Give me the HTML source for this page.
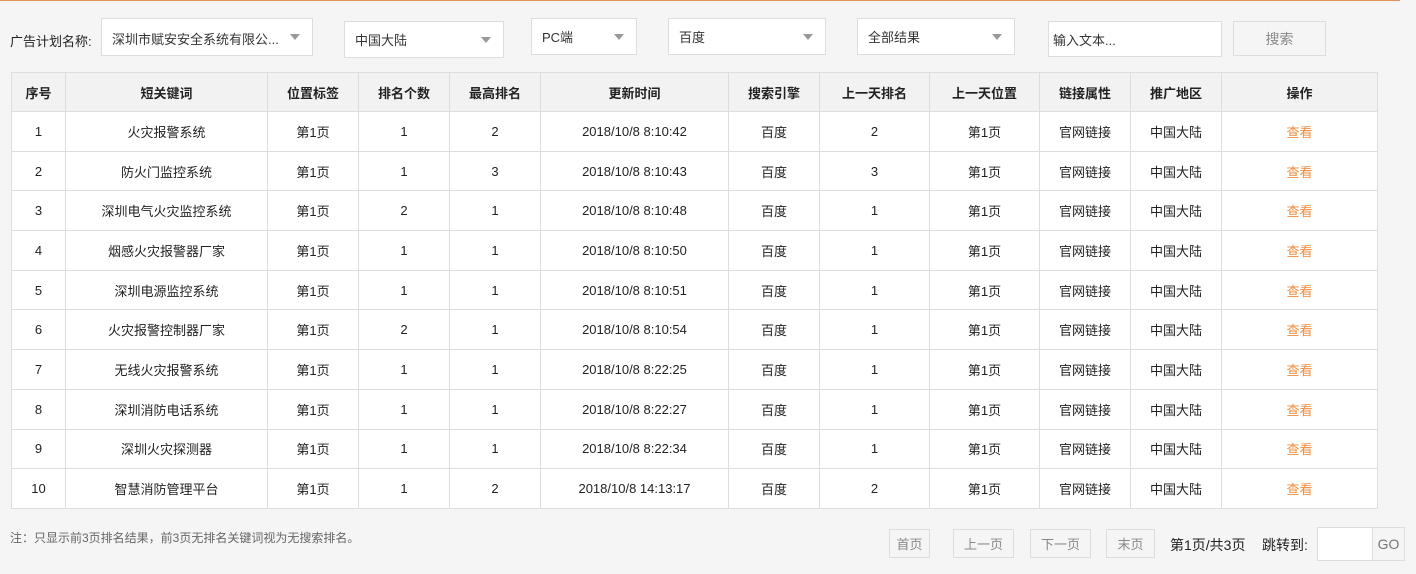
<!DOCTYPE html>
<html><head><meta charset="utf-8"><style>
*{box-sizing:border-box;margin:0;padding:0}
body{width:1416px;height:574px;background:#f5f5f5;font-family:"Liberation Sans","Noto Sans CJK SC",sans-serif;font-size:13px;color:#222;position:relative;overflow:hidden}
.topline{position:absolute;left:0;top:0;width:1400px;height:1px;background:#e8925a}
.abs{position:absolute}
.sel{position:absolute;background:#fff;border:1px solid #ddd;padding-left:10px;display:flex;align-items:center;color:#333}
.sel.a:after{content:"";position:absolute;right:12px;top:50%;margin-top:-3px;border-left:5px solid transparent;border-right:5px solid transparent;border-top:6px solid #999}
table{position:absolute;left:11px;top:72px;width:1366px;border-collapse:collapse;background:#fff;table-layout:fixed}
td,th{border:1px solid #ddd;text-align:center;font-size:13px;font-weight:normal;color:#222}
th{background:#f2f2f2;height:39px;font-weight:bold}
td{height:39.7px}
td.o{color:#f08c3e}
.btn{position:absolute;border:1px solid #ddd;background:#f5f5f5;color:#888;display:flex;align-items:center;justify-content:center}
</style></head><body>
<div class="topline"></div>
<div class="abs" style="left:10px;top:31px">广告计划名称:</div>
<div class="sel a" style="left:101px;top:18px;width:212px;height:38px;align-items:flex-start;padding-top:10px">深圳市赋安安全系统有限公...</div>
<div class="sel a" style="left:344px;top:21px;width:160px;height:37px">中国大陆</div>
<div class="sel a" style="left:531px;top:18px;width:106px;height:37px">PC端</div>
<div class="sel a" style="left:668px;top:18px;width:158px;height:37px">百度</div>
<div class="sel a" style="left:857px;top:18px;width:158px;height:37px">全部结果</div>
<div class="sel" style="left:1048px;top:21px;width:174px;height:36px;padding-left:4px">输入文本...</div>
<div class="btn" style="left:1233px;top:21px;width:93px;height:35px;font-size:14px">搜索</div>
<table>
<colgroup><col style="width:54px"><col style="width:202px"><col style="width:91px"><col style="width:91px"><col style="width:91px"><col style="width:188px"><col style="width:91px"><col style="width:110px"><col style="width:110px"><col style="width:91px"><col style="width:91px"><col style="width:156px"></colgroup>
<tr><th>序号</th><th>短关键词</th><th>位置标签</th><th>排名个数</th><th>最高排名</th><th>更新时间</th><th>搜索引擎</th><th>上一天排名</th><th>上一天位置</th><th>链接属性</th><th>推广地区</th><th>操作</th></tr>
<tr><td>1</td><td>火灾报警系统</td><td>第1页</td><td>1</td><td>2</td><td>2018/10/8 8:10:42</td><td>百度</td><td>2</td><td>第1页</td><td>官网链接</td><td>中国大陆</td><td class="o">查看</td></tr>
<tr><td>2</td><td>防火门监控系统</td><td>第1页</td><td>1</td><td>3</td><td>2018/10/8 8:10:43</td><td>百度</td><td>3</td><td>第1页</td><td>官网链接</td><td>中国大陆</td><td class="o">查看</td></tr>
<tr><td>3</td><td>深圳电气火灾监控系统</td><td>第1页</td><td>2</td><td>1</td><td>2018/10/8 8:10:48</td><td>百度</td><td>1</td><td>第1页</td><td>官网链接</td><td>中国大陆</td><td class="o">查看</td></tr>
<tr><td>4</td><td>烟感火灾报警器厂家</td><td>第1页</td><td>1</td><td>1</td><td>2018/10/8 8:10:50</td><td>百度</td><td>1</td><td>第1页</td><td>官网链接</td><td>中国大陆</td><td class="o">查看</td></tr>
<tr><td>5</td><td>深圳电源监控系统</td><td>第1页</td><td>1</td><td>1</td><td>2018/10/8 8:10:51</td><td>百度</td><td>1</td><td>第1页</td><td>官网链接</td><td>中国大陆</td><td class="o">查看</td></tr>
<tr><td>6</td><td>火灾报警控制器厂家</td><td>第1页</td><td>2</td><td>1</td><td>2018/10/8 8:10:54</td><td>百度</td><td>1</td><td>第1页</td><td>官网链接</td><td>中国大陆</td><td class="o">查看</td></tr>
<tr><td>7</td><td>无线火灾报警系统</td><td>第1页</td><td>1</td><td>1</td><td>2018/10/8 8:22:25</td><td>百度</td><td>1</td><td>第1页</td><td>官网链接</td><td>中国大陆</td><td class="o">查看</td></tr>
<tr><td>8</td><td>深圳消防电话系统</td><td>第1页</td><td>1</td><td>1</td><td>2018/10/8 8:22:27</td><td>百度</td><td>1</td><td>第1页</td><td>官网链接</td><td>中国大陆</td><td class="o">查看</td></tr>
<tr><td>9</td><td>深圳火灾探测器</td><td>第1页</td><td>1</td><td>1</td><td>2018/10/8 8:22:34</td><td>百度</td><td>1</td><td>第1页</td><td>官网链接</td><td>中国大陆</td><td class="o">查看</td></tr>
<tr><td>10</td><td>智慧消防管理平台</td><td>第1页</td><td>1</td><td>2</td><td>2018/10/8 14:13:17</td><td>百度</td><td>2</td><td>第1页</td><td>官网链接</td><td>中国大陆</td><td class="o">查看</td></tr>
</table>
<div class="abs" style="left:10px;top:529px;color:#666;font-size:12px">注：只显示前3页排名结果，前3页无排名关键词视为无搜索排名。</div>
<div class="btn" style="left:889px;top:529px;width:41px;height:29px">首页</div>
<div class="btn" style="left:953px;top:529px;width:61px;height:29px">上一页</div>
<div class="btn" style="left:1030px;top:529px;width:61px;height:29px">下一页</div>
<div class="btn" style="left:1106px;top:529px;width:49px;height:29px">末页</div>
<div class="abs" style="left:1170px;top:535px;color:#222;font-size:14px">第1页/共3页</div>
<div class="abs" style="left:1262px;top:535px;color:#222;font-size:14px">跳转到:</div>
<div class="abs" style="left:1317px;top:527px;width:56px;height:34px;background:#fff;border:1px solid #ddd"></div>
<div class="btn" style="left:1372px;top:527px;width:33px;height:34px;font-size:14px;color:#777">GO</div>
</body></html>
